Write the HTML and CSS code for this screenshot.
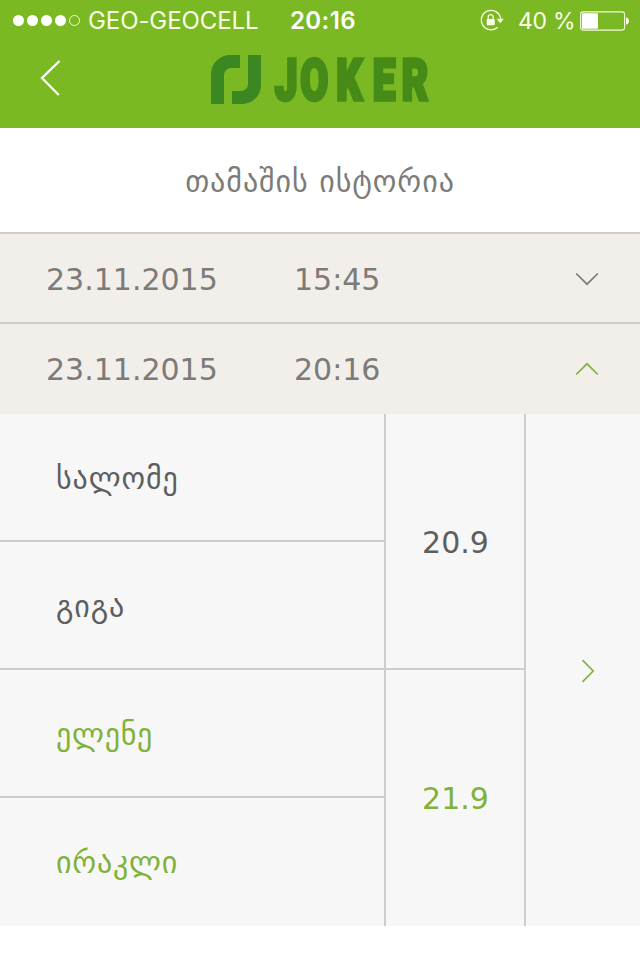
FILE: index.html
```html
<!DOCTYPE html>
<html lang="ka">
<head>
<meta charset="utf-8">
<title>Joker</title>
<link rel="stylesheet" href="styles.css">
</head>
<body>
<header class="header">
  <div class="status">
    <div class="signal"><i></i><i></i><i></i><i></i><i class="empty"></i></div>
    <span class="carrier">GEO-GEOCELL</span>
    <span class="clock">20:16</span>
    <svg class="lock" width="24" height="22" viewBox="0 0 24 22">
      <path d="M17.7 17.2A9.7 9.7 0 1 1 20.7 9" fill="none" stroke="#fbffe5" stroke-width="1.3"/>
      <path d="M16.6 8.8h7.2l-3.6 4.5z" fill="#fbffe5"/>
      <rect x="6.7" y="9" width="8" height="6.3" rx=".7" fill="#fbffe5"/>
      <path d="M8.2 9.5V7.2a2.5 2.5 0 0 1 5 0v2.3" fill="none" stroke="#fbffe5" stroke-width="1.3"/>
    </svg>
    <span class="percent">40 %</span>
    <svg class="battery" width="50" height="20" viewBox="0 0 50 20">
      <rect x=".6" y=".9" width="44" height="18.2" rx="2.5" fill="none" stroke="#f3fbd5" stroke-width="1.1"/>
      <rect x="2" y="2.3" width="16" height="15.4" rx="1" fill="#fff"/>
      <path d="M46 6.5c4 .2 4 6.8 0 7z" fill="#fbffe5"/>
    </svg>
  </div>
  <div class="nav">
    <svg class="back" width="22" height="38" viewBox="0 0 22 38">
      <path d="M19.5 2L2 19l16.8 17" fill="none" stroke="#fff" stroke-width="2.3"/>
    </svg>
    <svg class="logo" width="222" height="52" viewBox="0 0 222 52">
      <g fill="#3b8722">
        <path d="M1 50V20A19 19 0 0 1 20 1H30V14H21A7 7 0 0 0 14 21V50Z"/>
        <path d="M51 1V31A19 19 0 0 1 32 50H22V37H31A7 7 0 0 0 38 30V1Z"/>
      </g>
      <text class="wordmark" transform="scale(.7 1)" y="46" x="92.5 129 180.5 232.5 274">JOKER</text>
    </svg>
  </div>
</header>
<h1 class="title">თამაშის ისტორია</h1>
<main>
  <div class="session">
    <span class="date">23.11.2015</span><span class="time">15:45</span>
    <svg class="chevron" width="24" height="14" viewBox="0 0 24 14"><path d="M1.2 1.5L12 12.2 22.8 1.5"/></svg>
  </div>
  <div class="session open">
    <span class="date">23.11.2015</span><span class="time">20:16</span>
    <svg class="chevron" width="24" height="14" viewBox="0 0 24 14"><path d="M1.2 12.5L12 1.8 22.8 12.5"/></svg>
  </div>
  <section class="game">
    <div class="teams">
      <div class="team">
        <div class="players"><div class="player">სალომე</div><div class="player">გიგა</div></div>
        <div class="score">20.9</div>
      </div>
      <div class="team winner">
        <div class="players"><div class="player">ელენე</div><div class="player">ირაკლი</div></div>
        <div class="score">21.9</div>
      </div>
    </div>
    <div class="details">
      <svg class="chevron" width="14" height="24" viewBox="0 0 14 24"><path d="M1.5 1.2L12.2 12 1.5 22.8"/></svg>
    </div>
  </section>
</main>
</body>
</html>
```
FILE: styles.css
```css
* { box-sizing: border-box; }
body {
  margin: 0;
  width: 640px;
  height: 960px;
  overflow: hidden;
  background: #fff;
  color: #7c7b79;
  font: 30px/36px "DejaVu Sans", sans-serif;
}
svg { display: block; flex: none; overflow: visible; }
.header { height: 128px; background: #7ab824; }
.status {
  display: flex;
  align-items: center;
  height: 40px;
  padding: 1px 0 0 13px;
  color: #fbffe5;
  font: 24px/40px Inter, sans-serif;
  white-space: nowrap;
}
.signal { display: flex; gap: 3px; width: 75px; }
.signal i { width: 11px; height: 11px; border-radius: 50%; background: #fff; }
.signal .empty { background: none; border: 1px solid #f3fbd5; }
.carrier { width: 202px; letter-spacing: -.1px; }
.clock { width: 190px; font-weight: 600; color: #fff; letter-spacing: .4px; }
.lock { width: 24px; margin-right: 14px; }
.percent { width: 62px; font-size: 23px; letter-spacing: -.3px; }
.nav { display: flex; height: 88px; padding-left: 39px; }
.back { margin: 19px -1px 0 1px; }
.logo { margin: 14px 0 0 149px; }
.wordmark {
  font: 900 58px Roboto, sans-serif;
  fill: #468b18;
  stroke: #468b18;
  stroke-width: 3.6px;
}
.title {
  display: flex;
  align-items: center;
  justify-content: center;
  height: 104px;
  margin: 0;
  padding: 4px 0 0 0;
  font-size: 30px;
  font-weight: 400;
  letter-spacing: .95px;
}
.session {
  display: flex;
  align-items: center;
  height: 90px;
  padding: 4px 41px 0 46px;
  border-top: 2px solid #cecdcb;
  background: #f2efea;
}
.session.open { height: 92px; padding-bottom: 2px; }
.date { width: 248px; }
.session .chevron { margin: 0 0 2px auto; }
.chevron path { fill: none; stroke: #7c7b79; stroke-width: 1.7; }
.open .chevron path, .details .chevron path { stroke: #83b13d; }
.game { display: flex; height: 512px; background: #f7f7f7; color: #5e5e5e; }
.teams { width: 526px; border-right: 2px solid #cdcdcd; }
.team { display: flex; height: 256px; border-bottom: 2px solid #cdcdcd; }
.winner { color: #7fb239; border-bottom: 0; }
.players { width: 386px; border-right: 2px solid #cdcdcd; }
.player {
  display: flex;
  align-items: center;
  height: 128px;
  padding: 4px 0 0 56px;
  border-bottom: 2px solid #cdcdcd;
  letter-spacing: .9px;
}
.winner .player { letter-spacing: .75px; }
.player:last-child { border-bottom: 0; padding-top: 2px; }
.score { flex: 1; display: flex; align-items: center; justify-content: center; padding: 3px 0 0 1px; }
.winner .score { padding-top: 1px; }
.details { flex: 1; display: flex; align-items: center; padding: 2px 0 0 55px; }
```
